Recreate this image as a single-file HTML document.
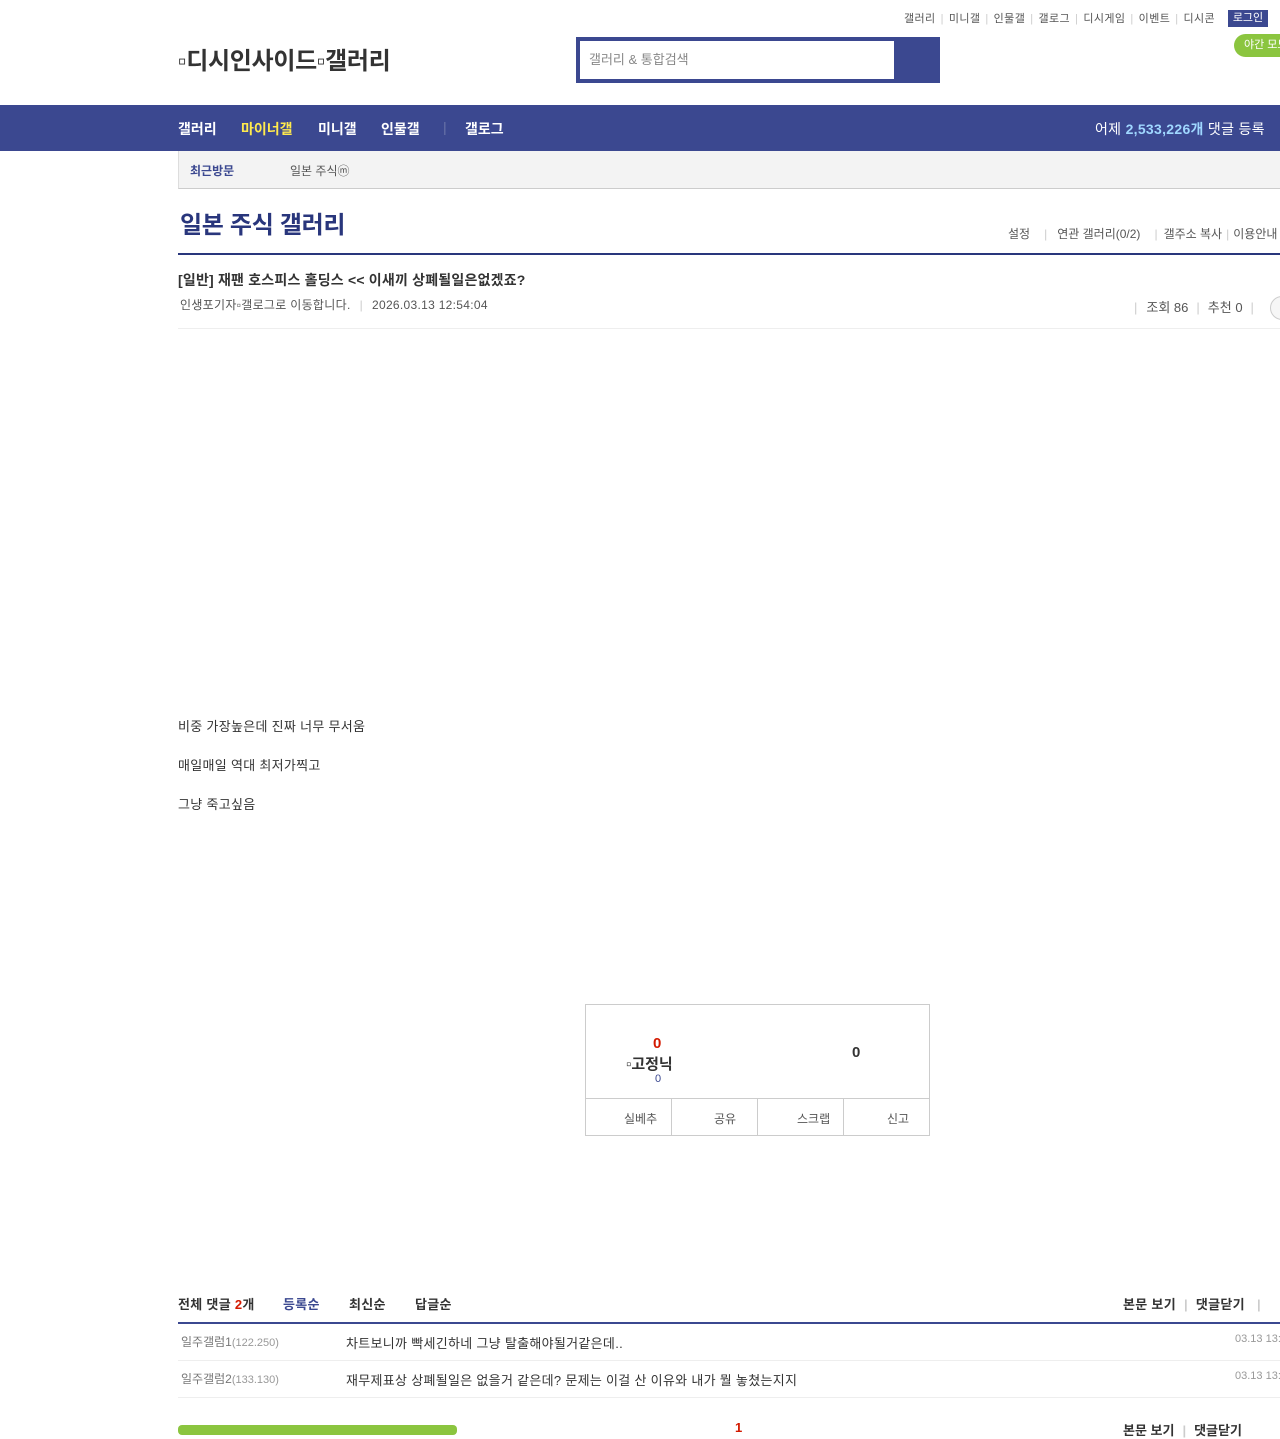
<!DOCTYPE html>
<html><head><meta charset="utf-8"><style>
*{margin:0;padding:0;box-sizing:border-box}
body{width:1280px;height:1428px;overflow:hidden;background:#fff;font-family:"Liberation Sans","Noto Sans CJK KR",sans-serif;color:#333;position:relative}
.a{position:absolute;white-space:nowrap}
.sep{color:#ccc;margin:0 4px}
</style></head><body>
<div class="a" style="top:10px;left:904px;font-size:11px;color:#555;letter-spacing:0.4px">갤러리<span class="sep" style="margin:0 5px">|</span>미니갤<span class="sep" style="margin:0 5px">|</span>인물갤<span class="sep" style="margin:0 5px">|</span>갤로그<span class="sep" style="margin:0 5px">|</span>디시게임<span class="sep" style="margin:0 5px">|</span>이벤트<span class="sep" style="margin:0 5px">|</span>디시콘</div>
<div class="a" style="top:10px;left:1228px;width:40px;height:17px;background:#3b4890;color:#fff;font-size:11px;text-align:center;line-height:17px">로그인</div>
<div class="a" style="top:34px;left:1234px;width:60px;height:23px;background:#8bc53f;border-radius:12px;color:#fff;font-size:11px;line-height:23px;padding-left:10px">야간 모드</div>
<div class="a" style="top:41px;left:178px;font-size:24px;font-weight:bold;color:#333;letter-spacing:-0.3px">▫디시인사이드▫갤러리</div>
<div class="a" style="top:37px;left:576px;width:364px;height:46px;background:#3b4890"></div>
<div class="a" style="top:41px;left:580px;width:314px;height:38px;background:#fff;font-size:13px;color:#888;line-height:38px;padding-left:9px">갤러리 &amp; 통합검색</div>
<div class="a" style="top:105px;left:0;width:1280px;height:46px;background:#3b4890"></div>
<div class="a" style="top:119px;left:178px;font-size:14px;font-weight:bold;color:#fff">갤러리</div>
<div class="a" style="top:119px;left:241px;font-size:14px;font-weight:bold;color:#ffea4d">마이너갤</div>
<div class="a" style="top:119px;left:318px;font-size:14px;font-weight:bold;color:#fff">미니갤</div>
<div class="a" style="top:119px;left:381px;font-size:14px;font-weight:bold;color:#fff">인물갤</div>
<div class="a" style="top:119px;left:443px;font-size:14px;color:#6a74a8">|</div>
<div class="a" style="top:119px;left:465px;font-size:14px;font-weight:bold;color:#fff">갤로그</div>
<div class="a" style="top:119px;left:1095px;font-size:14px;color:#fff;letter-spacing:0.3px">어제 <b style="color:#9fd7ff">2,533,226개</b> 댓글 등록</div>
<div class="a" style="top:151px;left:178px;width:1102px;height:38px;background:#f3f3f3;border-left:1px solid #ddd;border-bottom:1px solid #ccc"></div>
<div class="a" style="top:162px;left:190px;font-size:12px;font-weight:bold;color:#3b4890">최근방문</div>
<div class="a" style="top:162px;left:290px;font-size:12px;color:#555">일본 주식ⓜ</div>
<div class="a" style="top:205px;left:180px;font-size:24px;font-weight:bold;color:#29367c;letter-spacing:-0.3px">일본 주식 갤러리</div>
<div class="a" style="top:225px;left:1008px;font-size:12px;color:#555">설정<span class="sep" style="margin:0 10px 0 14px">|</span>연관 갤러리(0/2)<span class="sep" style="margin:0 6px 0 14px">|</span>갤주소 복사<span class="sep">|</span>이용안내</div>
<div class="a" style="top:253px;left:178px;width:1102px;height:2px;background:#29367c"></div>
<div class="a" style="top:270px;left:178px;font-size:14px;font-weight:bold;color:#333;letter-spacing:0.2px">[일반] 재팬 호스피스 홀딩스 &lt;&lt; 이새끼 상폐될일은없겠죠?</div>
<div class="a" style="top:296px;left:180px;font-size:12px;color:#555;letter-spacing:0.3px">인생포기자▫갤로그로 이동합니다.<span class="sep" style="margin:0 9px">|</span>2026.03.13 12:54:04</div>
<div class="a" style="top:297px;left:1134px;font-size:13px;color:#555"><span class="sep" style="margin:0 9px 0 0">|</span>조회 86<span class="sep" style="margin:0 8px">|</span>추천 0<span class="sep" style="margin:0 8px">|</span></div>
<div class="a" style="top:296px;left:1270px;width:24px;height:24px;border:1px solid #ccc;border-radius:12px;background:#f6f6f6"></div>
<div class="a" style="top:328px;left:178px;width:1102px;height:1px;background:#eee"></div>
<div class="a" style="top:707px;left:178px;font-size:13px;color:#333;line-height:39px;letter-spacing:0.3px">비중 가장높은데 진짜 너무 무서움<br>매일매일 역대 최저가찍고<br>그냥 죽고싶음</div>
<div class="a" style="top:1004px;left:585px;width:345px;height:132px;border:1px solid #ccc"></div>
<div class="a" style="top:1098px;left:586px;width:343px;height:1px;background:#ccc"></div>
<div class="a" style="top:1099px;left:671px;width:1px;height:36px;background:#ccc"></div>
<div class="a" style="top:1099px;left:757px;width:1px;height:36px;background:#ccc"></div>
<div class="a" style="top:1099px;left:843px;width:1px;height:36px;background:#ccc"></div>
<div class="a" style="top:1035px;left:653px;font-size:15px;font-weight:bold;color:#d31900">0</div>
<div class="a" style="top:1053px;left:626px;font-size:15px;font-weight:bold;color:#333">▫고정닉</div>
<div class="a" style="top:1073px;left:655px;font-size:11px;color:#3b4890">0</div>
<div class="a" style="top:1044px;left:852px;font-size:15px;font-weight:bold;color:#333">0</div>
<div class="a" style="top:1110px;left:624px;font-size:12px;color:#555">실베추</div>
<div class="a" style="top:1110px;left:714px;font-size:12px;color:#555">공유</div>
<div class="a" style="top:1110px;left:797px;font-size:12px;color:#555">스크랩</div>
<div class="a" style="top:1110px;left:887px;font-size:12px;color:#555">신고</div>
<div class="a" style="top:1294px;left:178px;font-size:13px;font-weight:bold;color:#333;letter-spacing:0.3px">전체 댓글 <span style="color:#d31900">2</span>개</div>
<div class="a" style="top:1294px;left:283px;font-size:13px;font-weight:bold;color:#3b4890;letter-spacing:0.3px">등록순</div>
<div class="a" style="top:1294px;left:349px;font-size:13px;font-weight:bold;color:#333;letter-spacing:0.3px">최신순</div>
<div class="a" style="top:1294px;left:415px;font-size:13px;font-weight:bold;color:#333;letter-spacing:0.3px">답글순</div>
<div class="a" style="top:1294px;left:1123px;font-size:13px;font-weight:bold;color:#333;letter-spacing:0.3px">본문 보기<span class="sep" style="margin:0 8px">|</span>댓글닫기<span class="sep" style="margin:0 12px">|</span></div>
<div class="a" style="top:1322px;left:178px;width:1102px;height:2px;background:#3b4890"></div>
<div class="a" style="top:1333px;left:181px;font-size:12px;color:#777">일주갤럼1<span style="font-size:11px;color:#999">(122.250)</span></div>
<div class="a" style="top:1333px;left:346px;font-size:13px;color:#333;letter-spacing:0.3px">차트보니까 빡세긴하네 그냥 탈출해야될거같은데..</div>
<div class="a" style="top:1333px;left:1235px;font-size:11px;color:#999">03.13 13:00:00</div>
<div class="a" style="top:1360px;left:178px;width:1102px;height:1px;background:#eee"></div>
<div class="a" style="top:1370px;left:181px;font-size:12px;color:#777">일주갤럼2<span style="font-size:11px;color:#999">(133.130)</span></div>
<div class="a" style="top:1370px;left:346px;font-size:13px;color:#333;letter-spacing:0.3px">재무제표상 상폐될일은 없을거 같은데? 문제는 이걸 산 이유와 내가 뭘 놓쳤는지지</div>
<div class="a" style="top:1370px;left:1235px;font-size:11px;color:#999">03.13 13:00:00</div>
<div class="a" style="top:1397px;left:178px;width:1102px;height:1px;background:#eee"></div>
<div class="a" style="top:1425px;left:178px;width:279px;height:10px;background:#8bc53f;border-radius:4px"></div>
<div class="a" style="top:1420px;left:735px;font-size:13px;font-weight:bold;color:#d31900">1</div>
<div class="a" style="top:1420px;left:1123px;font-size:13px;font-weight:bold;color:#333">본문 보기<span class="sep" style="margin:0 8px">|</span>댓글닫기</div>
</body></html>
